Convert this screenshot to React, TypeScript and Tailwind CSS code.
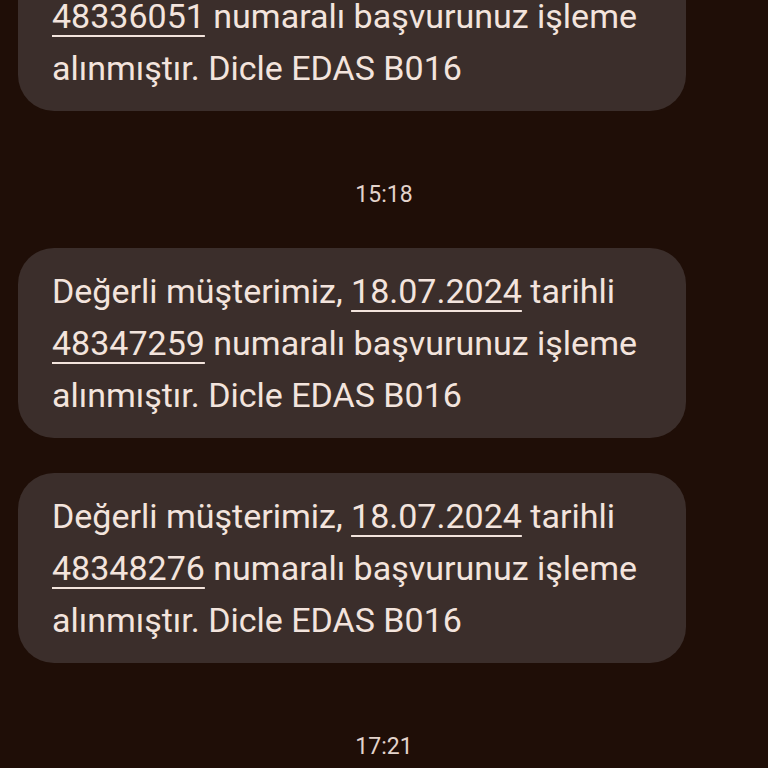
import React from "react";

const messages = [
  { date: "18.07.2024", no: "48336051" },
  { date: "18.07.2024", no: "48347259" },
  { date: "18.07.2024", no: "48348276" },
];

function Link(props: { children: React.ReactNode }) {
  return (
    <span className="underline decoration-2 underline-offset-[7px]">{props.children}</span>
  );
}

function Bubble(props: { date: string; no: string; className?: string }) {
  return (
    <div
      className={
        "ml-[18px] w-[668px] rounded-[36px] bg-[#3b2e2b] pl-[34px] pr-[16px] py-[17px] text-[34px] leading-[52px] text-[#f3e4dd] " +
        (props.className || "")
      }
    >
      Değerli müşterimiz, <Link>{props.date}</Link> tarihli <Link>{props.no}</Link> numaralı başvurunuz işleme
      alınmıştır. Dicle EDAS B016
    </div>
  );
}

function Time(props: { children: React.ReactNode }) {
  return (
    <div className="mt-[72px] mb-[41px] text-center text-[23px] leading-[24px] text-[#e3d3cb]">
      {props.children}
    </div>
  );
}

export default function App() {
  return (
    <div
      className="h-[768px] w-[768px] overflow-hidden bg-[#1f0e07]"
      style={{ fontFamily: "Roboto, 'Noto Sans', sans-serif" }}
    >
      <div className="-mt-[79px]">
        <Bubble date={messages[0].date} no={messages[0].no} />
        <Time>15:18</Time>
        <Bubble date={messages[1].date} no={messages[1].no} />
        <Bubble date={messages[2].date} no={messages[2].no} className="mt-[35px]" />
        <Time>17:21</Time>
      </div>
    </div>
  );
}
